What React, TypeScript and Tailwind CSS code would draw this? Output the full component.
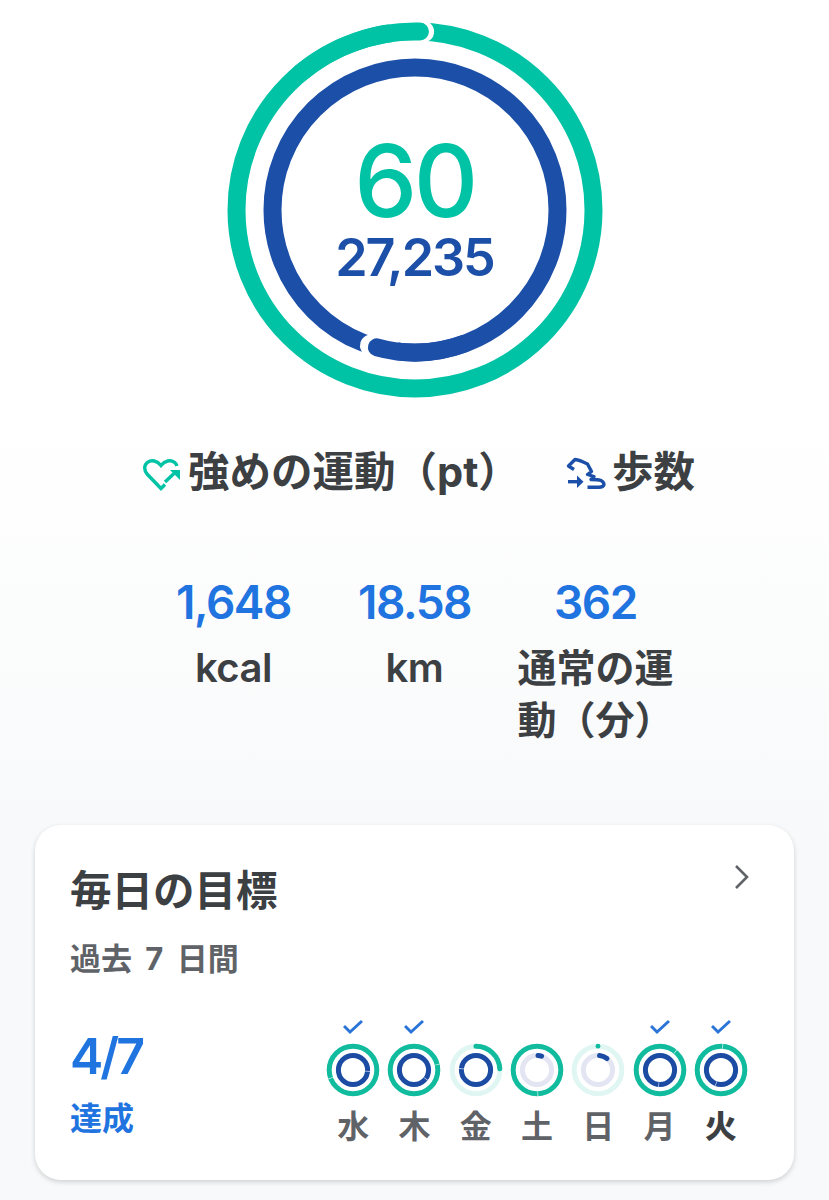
const TEAL = "#00c3a5";
const BLUE = "#1c4fa8";
const FONT = "font-['Inter','Noto_Sans_CJK_JP',sans-serif]";

function pt(cx: number, cy: number, r: number, deg: number) {
  const a = ((deg - 90) * Math.PI) / 180;
  return `${(cx + r * Math.cos(a)).toFixed(2)} ${(cy + r * Math.sin(a)).toFixed(2)}`;
}

function arc(cx: number, cy: number, r: number, from: number, to: number) {
  const large = to - from > 180 ? 1 : 0;
  return `M${pt(cx, cy, r, from)}A${r} ${r} 0 ${large} 1 ${pt(cx, cy, r, to)}`;
}

/* big rings at the top */
function MainRings() {
  return (
    <svg width="380" height="380" viewBox="0 0 380 380" className="mx-auto block">
      <circle cx="190" cy="190" r="178.5" fill="none" stroke={TEAL} strokeWidth="18" />
      <path d={arc(190, 190, 178.5, -6, 2.6)} fill="none" stroke="#fff" strokeWidth="22" strokeLinecap="round" />
      <path d={arc(190, 190, 178.5, -40, 1.6)} fill="none" stroke={TEAL} strokeWidth="18" strokeLinecap="round" />
      <circle cx="190" cy="190" r="142.5" fill="none" stroke={BLUE} strokeWidth="18" />
      <path d={arc(190, 190, 142.5, 190, 198)} fill="none" stroke="#fff" strokeWidth="22" strokeLinecap="round" />
      <path d={arc(190, 190, 142.5, 160, 195.5)} fill="none" stroke={BLUE} strokeWidth="18" strokeLinecap="round" />
    </svg>
  );
}

type Day = {
  label: string;
  done?: boolean;
  outer: number;
  inner: number;
  outerGap?: number;
  innerGap?: number;
  innerFrom?: number;
  today?: boolean;
};

const days: Day[] = [
  { label: "水", done: true, outer: 360, inner: 360, outerGap: 250, innerGap: 95 },
  { label: "木", done: true, outer: 360, inner: 360, outerGap: 77, innerGap: 127 },
  { label: "金", outer: 87, inner: 360, innerGap: 275 },
  { label: "土", outer: 360, inner: 18, outerGap: 178, innerFrom: 4 },
  { label: "日", outer: 0, inner: 38, innerFrom: 6 },
  { label: "月", done: true, outer: 360, inner: 360, outerGap: 40, innerGap: 185 },
  { label: "火", done: true, outer: 360, inner: 360, outerGap: 4, innerGap: 200, today: true },
];

function MiniRings({ day }: { day: Day }) {
  const teal = "#10bb9e";
  const blue = "#1c4ba4";
  const c = 28;
  return (
    <svg width="56" height="56" viewBox="0 0 56 56" className="block">
      <circle cx={c} cy={c} r="23.8" fill="none" stroke={day.outer >= 360 ? teal : "#e0f6f2"} strokeWidth="5" />
      {day.outer > 0 && day.outer < 360 && (
        <path d={arc(c, c, 23.8, 0, day.outer)} fill="none" stroke={teal} strokeWidth="5" strokeLinecap="round" />
      )}
      {day.outer === 0 && <circle cx={c} cy={c - 23.8} r="2.400" fill={teal} />}
      {day.outerGap !== undefined && (
        <path d={arc(c, c, 23.8, day.outerGap - 1, day.outerGap + 1)} fill="none" stroke="#bfece3" strokeWidth="5.200" />
      )}
      <circle cx={c} cy={c} r="14.6" fill="none" stroke={day.inner >= 360 ? blue : "#e3e6f2"} strokeWidth="5" />
      {day.inner < 360 && (
        <path d={arc(c, c, 14.6, day.innerFrom ?? 0, day.inner)} fill="none" stroke={blue} strokeWidth="5" strokeLinecap="round" />
      )}
      {day.innerGap !== undefined && (
        <path d={arc(c, c, 14.6, day.innerGap - 1.500, day.innerGap + 1.500)} fill="none" stroke="#b6c4e2" strokeWidth="5.200" />
      )}
    </svg>
  );
}

function HeartIcon() {
  return (
    <svg width="40" height="38" viewBox="0 0 40 38" fill="none" stroke={TEAL} strokeWidth="3.400">
      <path d="M24 28.500L20 32.500L6.500 18.500C2.500 14 3 9 6.500 6.300C10.500 3.500 16 4.500 20 9.500C24 4.500 29.500 3.500 33.500 6.300C34.800 7.300 35.600 8.500 36 10" />
      <path d="M24 26L33 17.500" />
      <path d="M29 14H39V24Z" fill={TEAL} strokeWidth="0" />
    </svg>
  );
}

function StepsIcon() {
  return (
    <svg width="44" height="38" viewBox="0 0 44 38" fill="none" stroke={BLUE} strokeWidth="3.400" strokeLinejoin="round">
      <path d="M10 13.500L4.500 10L11 3.500C13 3.500 15 4.500 17 5L23.500 8L27.500 15.500L23.500 18.500L30 20.500L27 23.500C31 23.500 35 23.500 37 24.500C40 26 41 29 38.500 30.500C37 31.500 35 31.200 33 31.200H23.500" />
      <path d="M4 25.700H14" />
      <path d="M13 19.500L19.500 25.700L13 32Z" fill={BLUE} strokeWidth="0" />
    </svg>
  );
}

export default function App() {
  return (
    <div className={`${FONT} h-[1200px] overflow-hidden bg-gradient-to-b from-white from-35% to-[#f8f9fa] to-70% pt-5`} lang="ja">
      {/* rings + totals */}
      <div className="relative">
        <MainRings />
        <div className="absolute inset-0 flex flex-col items-center justify-center">
          <div className="h-[84px] text-[100px] leading-[84px] font-medium tracking-[-3.500px] text-[#00c3a5]">60</div>
          <div className="mt-[11px] h-[48px] text-[52px] leading-[48px] font-semibold tracking-[-2px] text-[#1c4fa8]">27,235</div>
        </div>
      </div>

      {/* legend */}
      <div className="mt-[47px] flex h-[50px] items-center text-[41.500px] leading-[50px] font-bold text-[#3c4043]">
        <div className="ml-[141px] flex items-center">
          <span className="mt-[6px]"><HeartIcon /></span>
          <span className="ml-[7px] whitespace-nowrap">強めの運動（pt）</span>
        </div>
        <div className="ml-auto mr-[134px] flex items-center">
          <span className="mt-[6px]"><StepsIcon /></span>
          <span className="ml-[4px] whitespace-nowrap">歩数</span>
        </div>
      </div>

      {/* stats */}
      <div className="mx-auto mt-[80px] grid w-[518px] grid-cols-3 gap-x-[25px]">
        <div className="text-center">
          <div className="h-[50px] text-[46px] leading-[50px] font-semibold tracking-[-1.500px] whitespace-nowrap text-[#1f74e0]">1,648</div>
          <div className="mt-[15px] text-[40px] leading-[52px] font-semibold tracking-[-0.500px] text-[#3c4043]">kcal</div>
        </div>
        <div className="text-center">
          <div className="h-[50px] text-[46px] leading-[50px] font-semibold tracking-[-1.500px] whitespace-nowrap text-[#1f74e0]">18.58</div>
          <div className="mt-[15px] text-[40px] leading-[52px] font-semibold tracking-[-0.500px] text-[#3c4043]">km</div>
        </div>
        <div>
          <div className="h-[50px] text-center text-[46px] leading-[50px] font-semibold tracking-[-1.500px] text-[#1f74e0]">362</div>
          <div className="mt-[15px] text-[39px] leading-[52px] font-bold text-[#3c4043]">通常の運動（分）</div>
        </div>
      </div>

      {/* goals card */}
      <div className="relative mx-[35px] mt-[79px] h-[355px] rounded-[26px] bg-white px-[35px] pt-[41px] shadow-[0_2px_5px_rgba(60,64,67,0.22)]">
        <svg width="20" height="28" viewBox="0 0 20 28" fill="none" stroke="#5f6368" strokeWidth="2.600" className="absolute top-[38px] right-[42px]">
          <path d="M4 3L15 14L4 25" />
        </svg>
        <div className="h-[50px] text-[41.500px] leading-[50px] font-bold text-[#3c4043]">毎日の目標</div>
        <div className="mt-[23px] h-[40px] text-[31px] leading-[40px] font-bold [word-spacing:6px] whitespace-pre text-[#5f6368]">過去 7 日間</div>
        <div className="mt-[36px] flex justify-between">
          <div className="pt-[11px]">
            <div className="h-[60px] text-[50px] leading-[60px] font-semibold tracking-[-3px] text-[#1f74e0]">4/7</div>
            <div className="mt-[13px] h-[40px] text-[32px] leading-[40px] font-bold text-[#1f74e0]">達成</div>
          </div>
          <div className="mr-[7.500px] grid w-[429px] grid-cols-7">
            {days.map((day) => (
              <div key={day.label} className="flex flex-col items-center">
                <div className="flex h-[27px] items-start justify-center">
                  {day.done && (
                    <svg width="20" height="16" viewBox="0 0 20 16" fill="none" stroke="#2a74d8" strokeWidth="3" className="mt-[4px]">
                      <path d="M1 7L7 13L19 2" />
                    </svg>
                  )}
                </div>
                <MiniRings day={day} />
                <div className={`mt-[9px] h-[40px] text-[32px] leading-[40px] ${day.today ? "font-black text-[#3c4043]" : "font-bold text-[#5f6368]"}`}>
                  {day.label}
                </div>
              </div>
            ))}
          </div>
        </div>
      </div>
    </div>
  );
}
